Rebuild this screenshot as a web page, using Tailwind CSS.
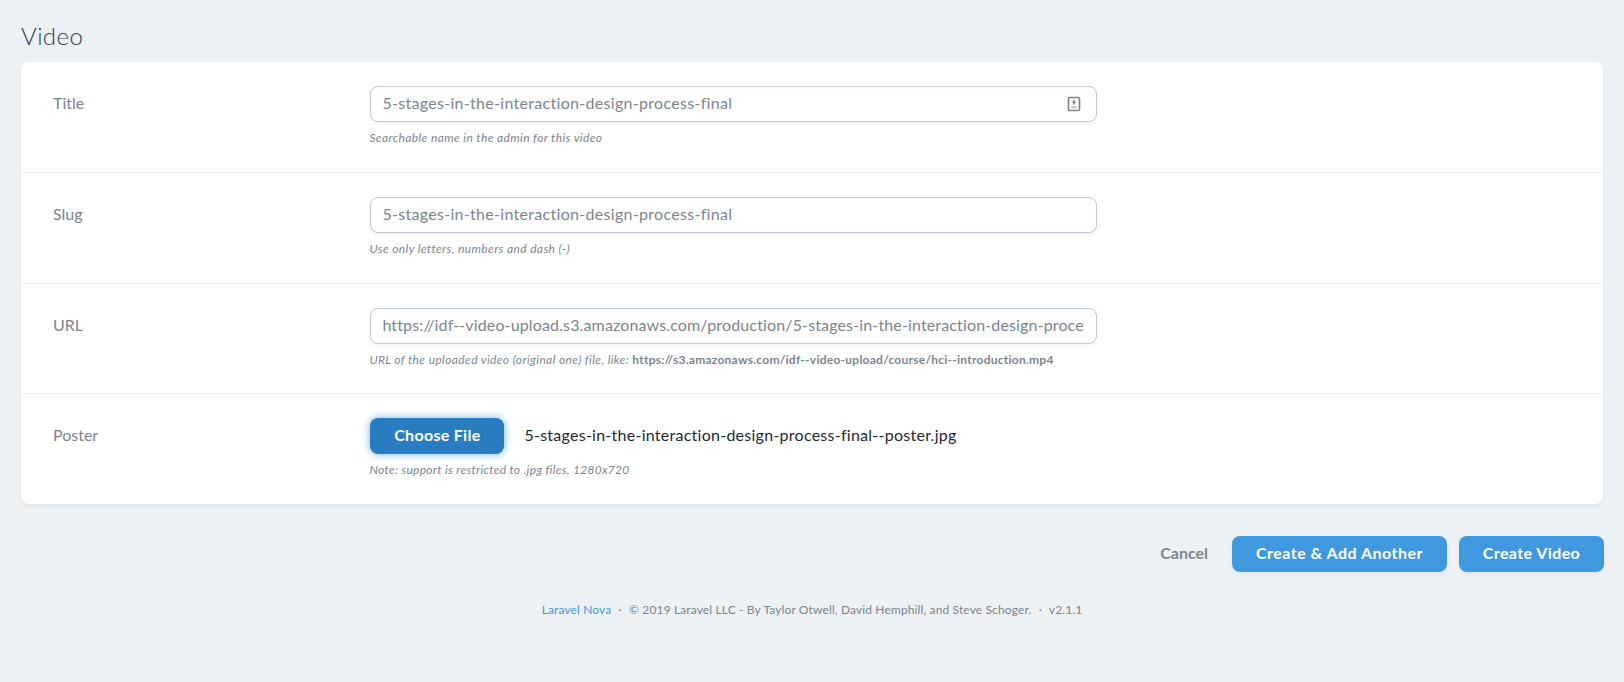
<!DOCTYPE html>
<html lang="en">
<head>
  <meta charset="UTF-8" />
  <title>Video</title>
  <script src="https://cdn.jsdelivr.net/npm/@tailwindcss/browser@4"></script>
</head>
<body class="bg-[#eef1f4] min-h-screen text-[#7c858e] font-['Lato',sans-serif]">
  <div class="px-[21px] pt-[20px]">
    <h1 class="text-[24px] leading-[32px] font-light tracking-[0.4px] text-[#2f3a4a] mb-[10px]">Video</h1>

    <div class="bg-white rounded-lg shadow-[0_2px_4px_0_rgba(0,0,0,0.05)]">
      <!-- title -->
      <div class="flex h-[110.8px] border-b border-[#eef1f4]">
        <div class="w-[calc(20%+1px)] px-8 pt-[23px] text-[16px] leading-[36px]">Title</div>
        <div class="w-1/2 px-8 pt-[24px]">
          <div class="h-[36px] flex items-center justify-between pl-[11px] pr-[15px] pb-[2px] rounded-lg border border-[#bacad6] shadow-[0_2px_4px_0_rgba(0,0,0,0.05)] text-[16px] tracking-[0.3px]">
            <span>5-stages-in-the-interaction-design-process-final</span>
            <svg class="w-[14px] h-[16px] mt-[2px]" viewBox="0 0 14 16" fill="none">
              <rect x="1.5" y="1.5" width="11" height="13" rx="1" stroke="#7c858e" stroke-width="1.6"/>
              <path d="M7 3.5 9 7H5z" fill="#7c858e"/>
              <path d="M6.2 6.5h1.6v2H6.2z" fill="#7c858e"/>
              <path d="M4.5 10h5v2.5h-5z" fill="#c3c7cb"/>
            </svg>
          </div>
          <p class="mt-[8px] -ml-[1px] text-[12px] leading-[16px] italic tracking-[0.38px]">Searchable name in the admin for this video</p>
        </div>
      </div>

      <!-- slug -->
      <div class="flex h-[110.8px] border-b border-[#eef1f4]">
        <div class="w-[calc(20%+1px)] px-8 pt-[23px] text-[16px] leading-[36px]">Slug</div>
        <div class="w-1/2 px-8 pt-[24px]">
          <div class="h-[36px] flex items-center pl-[11px] pr-[12px] pb-[2px] rounded-lg border border-[#bacad6] shadow-[0_2px_4px_0_rgba(0,0,0,0.05)] text-[16px] tracking-[0.3px]">
            <span>5-stages-in-the-interaction-design-process-final</span>
          </div>
          <p class="mt-[8px] -ml-[1px] text-[12px] leading-[16px] italic tracking-[0.38px]">Use only letters, numbers and dash (-)</p>
        </div>
      </div>

      <!-- url -->
      <div class="flex h-[110.8px] border-b border-[#eef1f4]">
        <div class="w-[calc(20%+1px)] px-8 pt-[23px] text-[16px] leading-[36px]">URL</div>
        <div class="w-1/2 px-8 pt-[24px]">
          <div class="h-[36px] flex items-center pl-[11px] pr-[12px] pb-[2px] rounded-lg border border-[#bacad6] shadow-[0_2px_4px_0_rgba(0,0,0,0.05)] text-[16px] tracking-[0.14px] whitespace-nowrap">
            <span>https://idf--video-upload.s3.amazonaws.com/production/5-stages-in-the-interaction-design-proce</span>
          </div>
          <p class="mt-[8px] -ml-[1px] text-[12px] leading-[16px] italic tracking-[0.38px] whitespace-nowrap">URL of the uploaded video (original one) file, like: <b class="not-italic font-bold tracking-[0.25px]">https://s3.amazonaws.com/idf--video-upload/course/hci--introduction.mp4</b></p>
        </div>
      </div>

      <!-- poster -->
      <div class="flex h-[110px]">
        <div class="w-[calc(20%+1px)] px-8 pt-[23px] text-[16px] leading-[36px]">Poster</div>
        <div class="w-1/2 px-8 pt-[24px]">
          <div class="flex items-center h-[36px]">
            <button class="w-[134px] h-[36px] pb-[2px] rounded-lg bg-[#2a7cc1] text-white font-bold text-[16px] tracking-[0.3px] shadow-[0_0_8px_#6cb2eb]">Choose File</button>
            <span class="ml-[20px] pb-[2px] text-[16px] tracking-[0.26px] text-[#1f2933]">5-stages-in-the-interaction-design-process-final--poster.jpg</span>
          </div>
          <p class="mt-[8px] -ml-[1px] text-[12px] leading-[16px] italic tracking-[0.3px]">Note: support is restricted to .jpg files, 1280x720</p>
        </div>
      </div>
    </div>

    <div class="flex items-center justify-end mt-[32px] -mr-[1px]">
      <a class="mr-[24px] pb-[2px] font-bold text-[16px] text-[#7c858e]">Cancel</a>
      <button class="w-[215px] h-[36px] pb-[2px] rounded-lg bg-[#4099de] text-white font-bold text-[16px] tracking-[0.5px] shadow-[0_2px_4px_0_rgba(0,0,0,0.05)]">Create &amp; Add Another</button>
      <button class="ml-[12px] w-[145px] h-[36px] pb-[2px] rounded-lg bg-[#4099de] text-white font-bold text-[16px] tracking-[0.4px] shadow-[0_2px_4px_0_rgba(0,0,0,0.05)]">Create Video</button>
    </div>

    <p class="mt-[29px] text-center text-[12px] leading-[18px] tracking-[0.13px]">
      <span class="text-[#4099de]">Laravel Nova</span>
      <span class="mx-[4px]">·</span>
      © 2019 Laravel LLC - By Taylor Otwell, David Hemphill, and Steve Schoger.
      <span class="mx-[4px]">·</span>
      v2.1.1
    </p>
  </div>
</body>
</html>
